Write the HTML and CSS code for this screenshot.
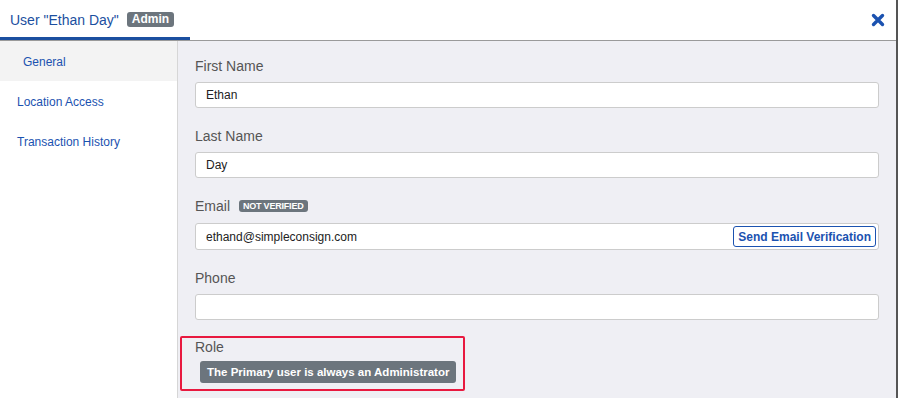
FILE: index.html
```html
<!DOCTYPE html>
<html lang="en">
<head>
    <meta charset="UTF-8">
    <title>User Ethan Day</title>
    <link rel="stylesheet" href="styles.css">
</head>
<body>
<div class="modal">
    <div class="modal-header">
        <div class="modal-tab">
            User "Ethan Day" <span class="badge">Admin</span>
        </div>
        <button class="close-btn" aria-label="Close">
            <svg width="14" height="14" viewBox="0 0 14 14">
                <path d="M2.5 2.5 L11.5 11.5 M11.5 2.5 L2.5 11.5" stroke="#1b52b0" stroke-width="3.4" stroke-linecap="round"/>
            </svg>
        </button>
    </div>
    <div class="modal-body">
        <div class="side-nav">
            <a class="nav-item active">General</a>
            <a class="nav-item">Location Access</a>
            <a class="nav-item">Transaction History</a>
        </div>
        <div class="form-pane">
            <div class="field">
                <label>First Name</label>
                <div class="input">Ethan</div>
            </div>
            <div class="field">
                <label>Last Name</label>
                <div class="input">Day</div>
            </div>
            <div class="field">
                <label>Email <span class="badge small">NOT VERIFIED</span></label>
                <div class="input with-btn">
                    <span>ethand@simpleconsign.com</span>
                    <button class="verify-btn">Send Email Verification</button>
                </div>
            </div>
            <div class="field">
                <label>Phone</label>
                <div class="input"></div>
            </div>
            <div class="field role-field">
                <label>Role</label>
                <span class="badge role-badge">The Primary user is always an Administrator</span>
            </div>
        </div>
    </div>
</div>
</body>
</html>
```

FILE: styles.css
```css
body {
    margin: 0;
    font-family: Arial, "Liberation Sans", sans-serif;
    background: #fff;
}
.modal {
    width: 898px;
    height: 398px;
    box-sizing: border-box;
    border-right: 2px solid #555;
    display: flex;
    flex-direction: column;
    overflow: hidden;
}
.modal-header {
    height: 40px;
    display: flex;
    justify-content: space-between;
    align-items: stretch;
    border-bottom: 1px solid #9a9a9a;
    flex-shrink: 0;
}
.modal-tab {
    width: 190px;
    padding-left: 10px;
    border-bottom: 3px solid #1b4fa0;
    color: #1b4fa0;
    font-size: 14px;
    white-space: nowrap;
    display: flex;
    align-items: center;
    padding-top: 2px;
    box-sizing: border-box;
    gap: 8px;
}
.badge {
    background: #6c757d;
    color: #fff;
    font-weight: bold;
    font-size: 12px;
    border-radius: 3px;
    padding: 1px 5px;
    line-height: 13px;
}
.badge.small {
    font-size: 9px;
    padding: 1px 4px;
    margin-left: 5px;
    position: relative;
    top: -2px;
    letter-spacing: -0.2px;
}
.close-btn {
    background: none;
    border: none;
    padding: 0 11px 0 0;
    margin: 0;
    cursor: pointer;
    display: flex;
    align-items: center;
}
.modal-body {
    flex: 1;
    display: flex;
}
.side-nav {
    width: 177px;
    flex-shrink: 0;
    border-right: 1px solid #d6d6d6;
    background: #fff;
}
.nav-item {
    display: block;
    height: 40px;
    line-height: 42px;
    padding-left: 17px;
    font-size: 12px;
    color: #1b52b0;
    cursor: pointer;
}
.nav-item.active {
    background: #f3f3f3;
    padding-left: 23px;
}
.form-pane {
    flex: 1;
    background: #efeff4;
    padding: 17px 17px 0 17px;
}
.field {
    margin-bottom: 20px;
}
.field label {
    display: block;
    color: #555;
    font-size: 14px;
    line-height: 16px;
    margin-bottom: 8px;
}
.input {
    height: 24px;
    background: #fff;
    border: 1px solid #ccc;
    border-radius: 3px;
    font-size: 12px;
    color: #222;
    padding-left: 10px;
    display: flex;
    align-items: center;
    justify-content: space-between;
}
.input.with-btn {
    height: 25px;
    padding-right: 2px;
}
.verify-btn {
    background: #fff;
    border: 1px solid #1b52b0;
    border-radius: 3px;
    color: #1b52b0;
    font-family: Arial, "Liberation Sans", sans-serif;
    font-weight: bold;
    font-size: 12px;
    height: 21px;
    padding: 0 4px;
    cursor: pointer;
}
.role-field {
    margin: -4px 0 0 -15px;
    width: 268px;
    border: 2px solid #e8193f;
    border-radius: 2px;
    padding: 1px 0 6px 13px;
}
.role-field label {
    margin-bottom: 6px;
}
.role-badge {
    display: inline-block;
    margin-left: 5px;
    padding: 5px 7px 4px;
    font-size: 11.5px;
}
```
